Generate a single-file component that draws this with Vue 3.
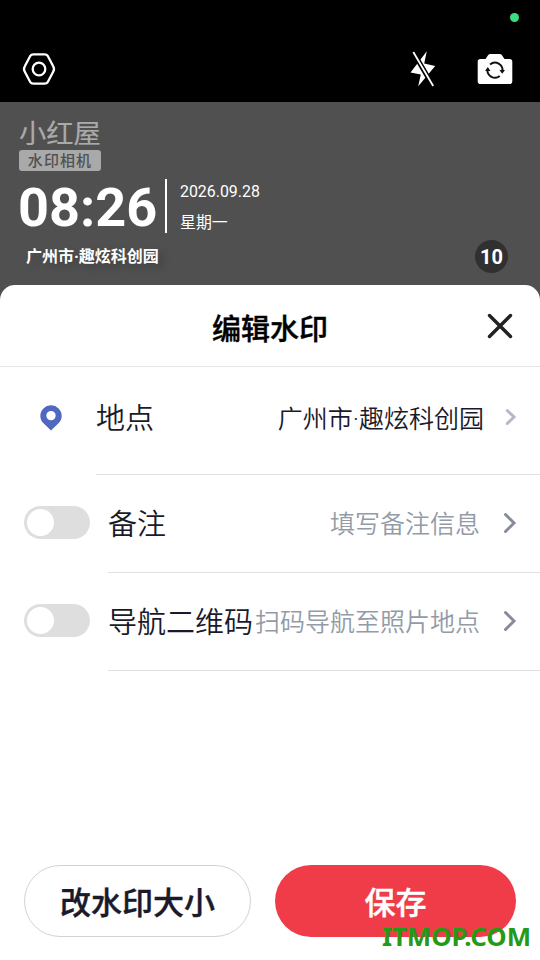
<script setup>
const options = [
  { label: '备注', hint: '填写备注信息' },
  { label: '导航二维码', hint: '扫码导航至照片地点' },
]
</script>

<template>
  <main class="screen">
    <header class="topbar">
      <i class="status-dot"></i>
      <svg class="settings" width="36" height="36" viewBox="0 0 36 36" fill="none" stroke="#fff" stroke-width="2.3" stroke-linejoin="round">
        <path d="M12.4 3.3H23.6Q25.8 3.3 26.9 5.2L32.2 15.2Q33.8 18 32.2 20.8L26.9 30.8Q25.8 32.7 23.6 32.7H12.4Q10.2 32.7 9.1 30.8L3.8 20.8Q2.2 18 3.8 15.2L9.1 5.2Q10.2 3.3 12.4 3.3Z" />
        <circle cx="18" cy="18" r="6.3" />
      </svg>
      <svg class="flash" width="28" height="38" viewBox="0 0 28 38">
        <path d="M17.8 1.2L15.2 13.5L26.2 16L9.2 36.2L11.8 24.4L1.5 22.5Z" fill="#fff" />
        <path d="M4.5 2.5L24 36" stroke="#000" stroke-width="5" />
        <path d="M4.3 2L24.2 36" stroke="#fff" stroke-width="1.8" />
      </svg>
      <svg class="camera" width="36" height="32" viewBox="0 0 36 32">
        <path d="M3.5 6H8.5L11.2 2Q12 1 13.4 1H22.6Q24 1 24.8 2L27.5 6H32.5Q35.3 6 35.3 8.8V28.2Q35.3 31 32.5 31H3.5Q.7 31 .7 28.2V8.8Q.7 6 3.5 6Z" fill="#fff" />
        <g fill="none" stroke="#111" stroke-width="2">
          <path d="M13.1 11.5A7.5 7.5 0 0 1 25.4 18.4" />
          <path d="M22.7 23A7.5 7.5 0 0 1 10.5 16.4" />
        </g>
        <path d="M22.4 16.9H28L25.2 20.8ZM8.1 18L10.8 14L13.5 18Z" fill="#111" />
      </svg>
    </header>

    <section class="preview">
      <div class="logo">
        <span class="brand">小红屋</span>
        <span class="tag">水印相机</span>
      </div>
      <div class="stamp">
        <strong class="time">08:26</strong>
        <i class="bar"></i>
        <div class="date"><span>2026.09.28</span><span>星期一</span></div>
      </div>
      <div class="place-row">
        <span class="place">广州市·趣炫科创园</span>
        <span class="count">10</span>
      </div>
    </section>

    <section class="sheet">
      <div class="title-row">
        <h1>编辑水印</h1>
        <svg class="close" width="28" height="28" viewBox="0 0 28 28" stroke="#222" stroke-width="3.4" stroke-linecap="round">
          <path d="M3.5 3.5L24.5 24.5M24.5 3.5L3.5 24.5" />
        </svg>
      </div>
      <div class="row location">
        <svg class="pin" width="22" height="26" viewBox="0 0 22 26">
          <path fill-rule="evenodd" d="M11 .3A10.6 10.6 0 0 0 .3 11C.3 14 1.5 16.3 3.5 18.3L11 25.5L18.5 18.3C20.5 16.3 21.7 14 21.7 11A10.6 10.6 0 0 0 11 .3ZM11 5.9A4.7 4.7 0 1 1 11 15.3A4.7 4.7 0 0 1 11 5.9Z" fill="#4e69bf" />
        </svg>
        <div class="body">
          <span class="label">地点</span>
          <span class="value">广州市·趣炫科创园</span>
          <svg class="chevron small" width="12" height="18" viewBox="0 0 12 18"><path d="M2.3 2.5L9 9L2.3 15.5" /></svg>
        </div>
      </div>
      <div v-for="option in options" :key="option.label" class="row option">
        <span class="toggle"></span>
        <div class="body">
          <span class="label">{{ option.label }}</span>
          <span class="value hint">{{ option.hint }}</span>
          <svg class="chevron" width="14" height="22" viewBox="0 0 14 22"><path d="M2.5 2.5L11 11L2.5 19.5" /></svg>
        </div>
      </div>
      <footer class="actions">
        <button class="resize">改水印大小</button>
        <button class="save">保存</button>
      </footer>
    </section>
    <span class="watermark">ITMOP.COM</span>
  </main>
</template>

<style>
body { background: #505050; }
</style>

<style scoped>
* { box-sizing: border-box; }
.screen {
  position: relative;
  display: flex;
  flex-direction: column;
  width: 540px;
  height: 960px;
  overflow: hidden;
  background: #505050;
  color: #1a1a2b;
  font-family: Roboto, "Noto Sans CJK SC", sans-serif;
  white-space: nowrap;
}
svg { display: block; flex: none; }
.topbar {
  position: relative;
  display: flex;
  align-items: center;
  height: 102px;
  padding: 36px 27px 0 21px;
  background: #000;
}
.status-dot {
  position: absolute;
  top: 13px;
  right: 21px;
  width: 9px;
  height: 9px;
  border-radius: 50%;
  background: #3ddc84;
}
.flash { margin-left: auto; margin-right: 40px; }
.preview { height: 183px; padding: 17px 32px 0 19px; color: #fff; }
.logo { display: flex; flex-direction: column; width: 82px; height: 52px; }
.brand {
  height: 31px;
  color: #aaa;
  font-size: 27.3px;
  line-height: 32px;
  font-weight: 400;
  -webkit-text-stroke: .2px #aaa;
  transform: scaleY(.94);
  transform-origin: top;
}
.tag {
  height: 21px;
  border-radius: 3px;
  background: #a9a9a9;
  color: #505050;
  font-size: 15px;
  line-height: 22px;
  letter-spacing: 1.1px;
  font-weight: 500;
  text-align: center;
}
.stamp { display: flex; height: 71px; padding-top: 8px; }
.time { width: 146px; margin-left: -1px; margin-right: 1px; font-size: 54px; line-height: 58px; font-weight: 700; }
.bar { width: 2px; height: 54px; background: #fff; }
.date { display: flex; flex-direction: column; margin-left: 13px; font-size: 15.9px; line-height: 31px; margin-top: -3px; }
.place-row { display: flex; justify-content: space-between; }
.place {
  margin-left: 7px;
  font-size: 16px;
  line-height: 29px;
  font-weight: 700;
  text-shadow: 5px 4px 8px rgba(0, 0, 0, .2);
}
.count {
  width: 33px;
  height: 33px;
  margin-top: -2px;
  border-radius: 50%;
  background: #303030;
  font-size: 20px;
  line-height: 34px;
  font-weight: 700;
  text-align: center;
}
.sheet {
  display: flex;
  flex-direction: column;
  flex: 1;
  border-radius: 15px 15px 0 0;
  background: #fff;
}
.title-row {
  display: grid;
  grid-template-columns: 54px 1fr 54px;
  align-items: center;
  height: 82px;
  border-bottom: 1px solid #e5e5e5;
}
h1 {
  grid-column: 2;
  margin: 8px 0 0;
  color: #000;
  font-size: 29px;
  line-height: 42px;
  font-weight: 500;
  -webkit-text-stroke: .4px currentColor;
  text-align: center;
}
.row { display: flex; align-items: center; }
.location { height: 108px; padding-left: 40px; }
.option { height: 98px; padding-left: 24px; }
.pin { margin-right: 34px; margin-top: -7px; }
.body {
  display: flex;
  align-items: center;
  flex: 1;
  height: 100%;
  border-bottom: 1px solid #e1e1e4;
  padding-right: 23px;
}
.location .body { padding-bottom: 8px; }
.label { font-size: 29px; line-height: 42px; padding-top: 2px; font-weight: 350; }
.location .label { padding-top: 4px; }
.value { margin-left: auto; font-size: 25px; line-height: 36px; padding-top: 2px; font-weight: 350; }
.location .value { padding-top: 6px; }
.hint { color: #929ba6; }
.toggle {
  display: flex;
  align-items: center;
  width: 66px;
  height: 33px;
  margin-right: 18px;
  margin-bottom: 3px;
  padding-left: 3px;
  border-radius: 17px;
  background: #dedede;
}
.toggle::before {
  content: "";
  width: 27px;
  height: 27px;
  border-radius: 50%;
  background: #fff;
}
.chevron {
  margin-left: 23px;
  margin-bottom: 2px;
  fill: none;
  stroke: #868b99;
  stroke-width: 3;
  stroke-linecap: round;
}
.chevron.small { margin-left: 21px; margin-bottom: 0; stroke: #b4b8c8; stroke-width: 3; }
.actions { display: flex; gap: 24px; margin-top: auto; padding: 0 24px 23px; }
button {
  height: 72px;
  padding: 0 0 2px;
  border-radius: 36px;
  font-family: inherit;
  font-size: 31px;
  font-weight: 500;
  -webkit-text-stroke: .4px currentColor;
}
.resize { width: 227px; border: 1px solid #d1d2d8; background: #fff; color: #1a1a2b; }
.save { width: 241px; border: 0; background: #f03b48; color: #fff; }
.watermark {
  position: absolute;
  right: 9px;
  bottom: 6px;
  color: #269a16;
  font-family: "Noto Sans", sans-serif;
  font-size: 25.8px;
  line-height: 36px;
  font-weight: 700;
}
</style>
